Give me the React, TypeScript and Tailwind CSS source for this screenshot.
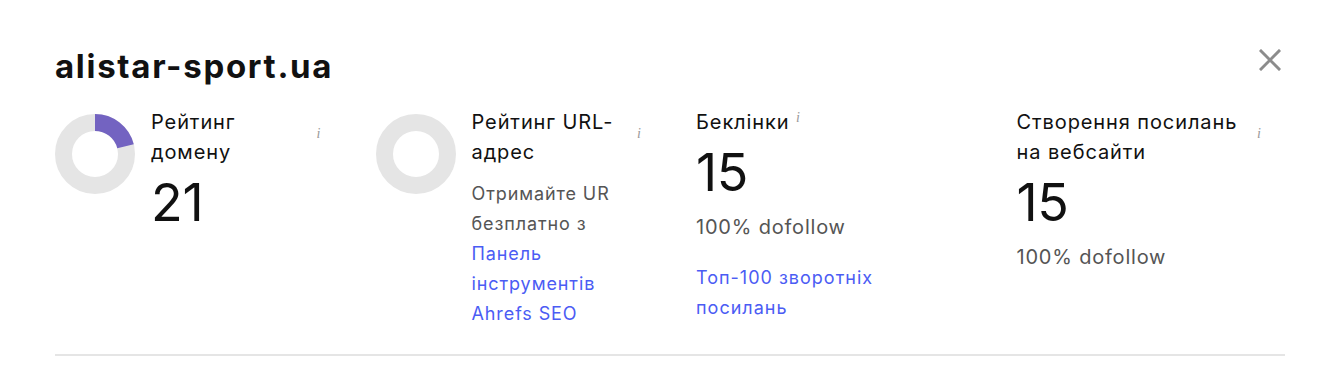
import React from 'react';

const font = { fontFamily: 'Inter, "Noto Sans", sans-serif' };

// donut ring, value 0..100
const Donut = ({ value }: { value: number }) => {
  const r = 31.5;
  const c = 2 * Math.PI * r;
  return (
    <svg width="80" height="80" viewBox="0 0 80 80" className="shrink-0 mt-[7px]">
      <circle cx="40" cy="40" r={r} fill="none" stroke="#e5e5e5" strokeWidth="17" />
      {value > 0 && (
        <circle
          cx="40"
          cy="40"
          r={r}
          fill="none"
          stroke="#7363c1"
          strokeWidth="17"
          strokeDasharray={`${(c * value) / 100} ${c}`}
          transform="rotate(-90 40 40)"
        />
      )}
    </svg>
  );
};

const Info = ({ className = '' }: { className?: string }) => (
  <span
    className={`text-[14px] italic text-[#999] leading-none select-none ${className}`}
    style={{ fontFamily: '"Liberation Serif", serif' }}
  >
    i
  </span>
);

const Title = ({ children }: { children: React.ReactNode }) => (
  <div className="text-[20px] leading-[30px] text-[#111] tracking-[0.9px]">{children}</div>
);

const Big = ({ children }: { children: React.ReactNode }) => (
  <div className="mt-[6px] text-[52px] leading-[60px] text-[#111] tracking-[-0.3px]">{children}</div>
);

export default function App() {
  return (
    <div className="w-[1331px] h-[391px] bg-white" style={font}>
      <div className="pl-[55px] pr-[46px] pt-[44px]">
        <div className="flex items-start justify-between">
          <h1 className="text-[33px] font-bold leading-[44px] text-[#111] tracking-[1.7px]">alistar-sport.ua</h1>
          <button className="mt-[5px] mr-[4px] w-[22px] h-[22px] flex items-center justify-center">
            <svg width="22" height="22" viewBox="0 0 22 22">
              <path d="M2 2 L20 20 M20 2 L2 20" stroke="#8c8c8c" strokeWidth="3" strokeLinecap="square" />
            </svg>
          </button>
        </div>

        <div className="grid grid-cols-4 gap-x-[52px] mt-[19px]">
          {/* domain rating */}
          <div className="flex gap-[16px]">
            <Donut value={21} />
            <div className="flex-1">
              <div className="flex justify-between pr-[3px]">
                <Title>
                  Рейтинг
                  <br />
                  домену
                </Title>
                <Info className="mt-[20px]" />
              </div>
              <Big>21</Big>
            </div>
          </div>

          {/* url rating */}
          <div className="flex gap-[16px]">
            <Donut value={0} />
            <div className="flex-1">
              <div className="flex justify-between pr-[3px]">
                <Title>
                  Рейтинг URL-
                  <br />
                  адрес
                </Title>
                <Info className="mt-[20px]" />
              </div>
              <div className="mt-[12px] text-[18px] leading-[30px] text-[#555] tracking-[0.9px]">
                Отримайте UR
                <br />
                безплатно з
                <br />
                <a className="text-[#4b5cf4]" href="#">
                  Панель
                  <br />
                  інструментів
                  <br />
                  Ahrefs SEO
                </a>
              </div>
            </div>
          </div>

          {/* backlinks */}
          <div>
            <Title>
              Беклінки <Info className="relative -top-[7px]" />
            </Title>
            <Big>15</Big>
            <div className="mt-[9px] text-[20px] leading-[30px] text-[#555] tracking-[0.8px]">100% dofollow</div>
            <a className="block mt-[21px] text-[18px] leading-[30px] text-[#4b5cf4] tracking-[1px]" href="#">
              Топ-100 зворотніх
              <br />
              посилань
            </a>
          </div>

          {/* linking websites */}
          <div>
            <div className="flex justify-between pr-[24px]">
              <Title>
                Створення посилань
                <br />
                на вебсайти
              </Title>
              <Info className="mt-[20px]" />
            </div>
            <Big>15</Big>
            <div className="mt-[9px] text-[20px] leading-[30px] text-[#555] tracking-[0.8px]">100% dofollow</div>
          </div>
        </div>

        <div className="mt-[25px] h-[2px] bg-[#e5e5e5]" />
      </div>
    </div>
  );
}
